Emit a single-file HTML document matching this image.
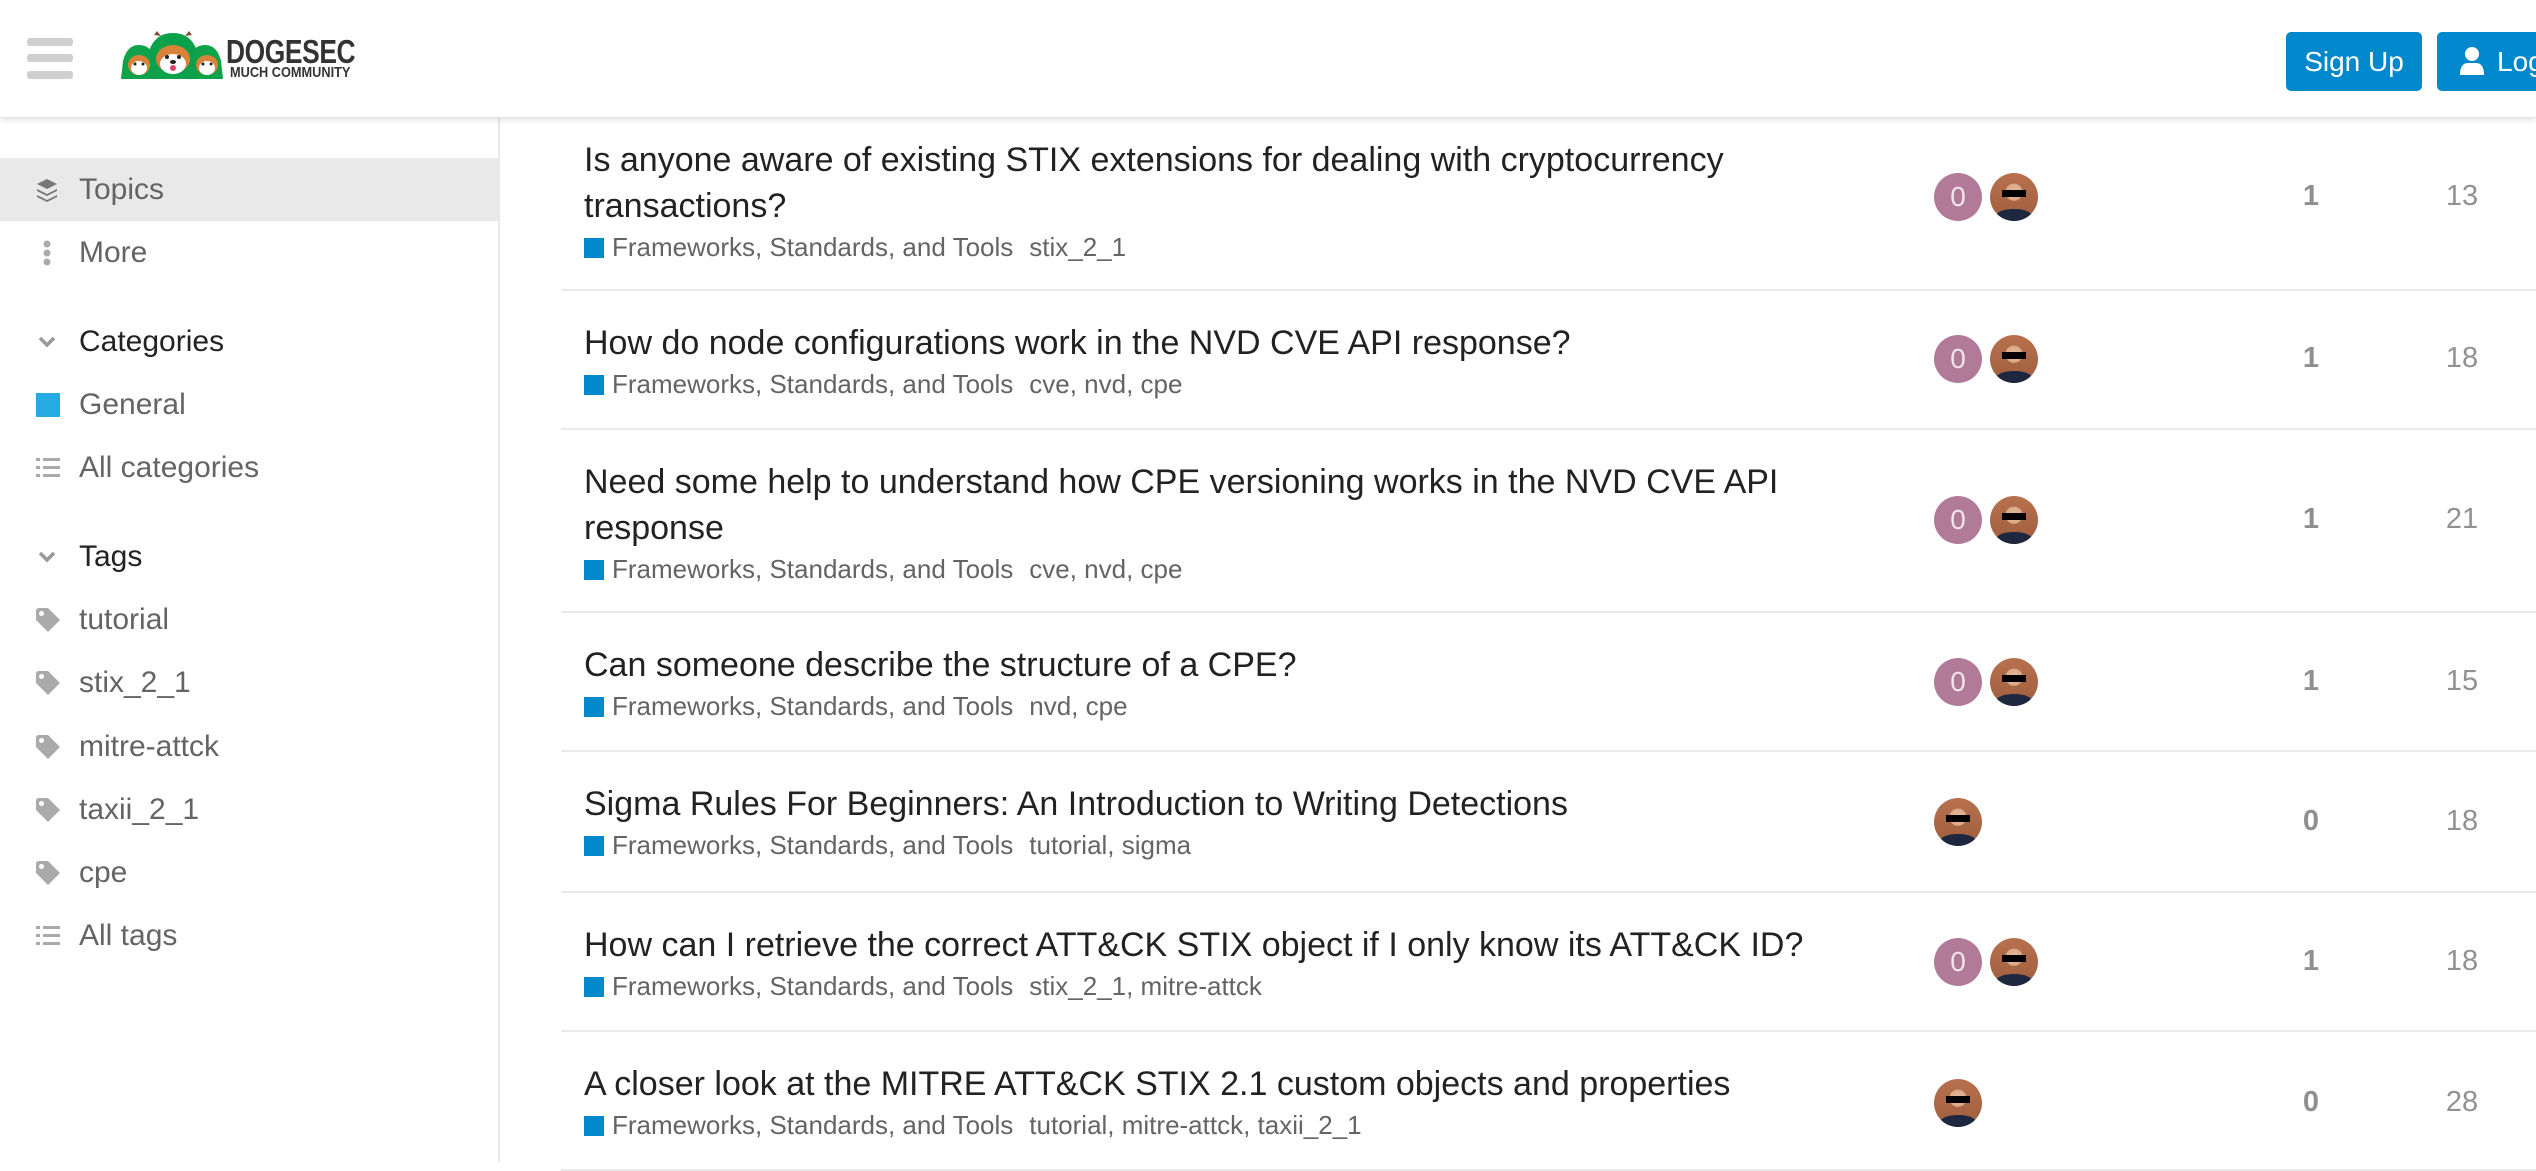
<!DOCTYPE html>
<html><head><meta charset="utf-8"><style>
*{margin:0;padding:0;box-sizing:border-box}
body{width:2536px;height:1162px;overflow:hidden;background:#fff;font-family:"Liberation Sans",Arial,sans-serif;position:relative}
.hdr{position:absolute;left:0;top:0;width:2536px;height:118px;background:#fff;z-index:5;box-shadow:0 2px 6px rgba(0,0,0,.12);border-bottom:1px solid #e4e4e4;overflow:hidden}
.bar{position:absolute;left:27px;width:46px;height:8px;border-radius:3px;background:#cfcfcf}
.btn{position:absolute;top:32px;height:59px;background:#0088cc;color:#fff;border-radius:5px;font-size:28px;line-height:59px;white-space:nowrap}
.side{position:absolute;left:0;top:118px;width:500px;height:1044px;border-right:2px solid #e9e9e9}
.si{position:absolute;left:0;width:498px;height:63px;line-height:63px;font-size:30px;color:#646464;padding-left:79px}
.si.h{color:#222}
.si svg{position:absolute;left:36px;top:50%;transform:translateY(-50%)}
.row{position:absolute;left:561px;width:1975px;border-bottom:2px solid #e9e9e9}
.t{position:absolute;left:23px;top:29px;width:1300px;font-size:34px;line-height:46px;color:#222}
.m{font-size:26px;line-height:30px;color:#646464;margin-top:3px}
.m b{font-weight:normal;margin-left:16px}
.sq{display:inline-block;width:20px;height:20px;background:#0088cc;vertical-align:-2px;margin-right:8px}
.av{position:absolute;width:48px;height:48px;border-radius:50%}
.p0{background:#b07a98;color:#f0e4ea;font-size:28px;text-align:center;line-height:48px}
.ph{background:radial-gradient(circle at 50% 40%,#e8c0a0 0,#d9a888 22%,transparent 24%),linear-gradient(#b8714e,#9e5e3e);overflow:hidden}
.ph:before{content:"";position:absolute;left:12px;top:17px;width:24px;height:7px;background:#000}
.ph:after{content:"";position:absolute;left:6px;top:36px;width:36px;height:14px;background:#1d2740;border-radius:50% 50% 0 0}
.rp{position:absolute;font-size:29px;font-weight:bold;color:#8f8f8f;width:60px;text-align:center;left:1720px}
.vw{position:absolute;font-size:29px;color:#919191;width:80px;text-align:center;left:1861px}
</style></head><body>
<div class="hdr">
 <div class="bar" style="top:38px"></div><div class="bar" style="top:54px"></div><div class="bar" style="top:71px"></div>
 <svg style="position:absolute;left:121px;top:31px" width="104" height="50" viewBox="0 0 104 50">
  <path d="M0 48 L2 30 Q6 14 18 14 Q30 14 34 28 L36 48Z" fill="#0ea34a"/>
  <path d="M68 48 L68 28 Q72 14 84 14 Q96 14 100 30 L102 48Z" fill="#0ea34a"/>
  <path d="M28 48 L28 20 Q34 2 52 2 Q70 2 76 20 L76 48Z" fill="#0ba04a"/>
  <path d="M33 4 L36 0 L40 5Z M64 5 L68 0 L71 4Z" fill="#7a5330"/>
  <ellipse cx="52" cy="28" rx="17" ry="14" fill="#d9833a"/><ellipse cx="52" cy="33" rx="13" ry="10" fill="#fff"/>
  <ellipse cx="18" cy="34" rx="11" ry="10" fill="#d9833a"/><ellipse cx="18" cy="37" rx="8" ry="7" fill="#fff"/>
  <ellipse cx="86" cy="34" rx="11" ry="10" fill="#d9833a"/><ellipse cx="86" cy="37" rx="8" ry="7" fill="#fff"/>
  <circle cx="46" cy="26" r="2" fill="#222"/><circle cx="58" cy="26" r="2" fill="#222"/><ellipse cx="52" cy="31" rx="3" ry="2" fill="#222"/><ellipse cx="52" cy="37" rx="3" ry="3" fill="#e2436a"/>
  <circle cx="14" cy="33" r="1.5" fill="#222"/><circle cx="22" cy="33" r="1.5" fill="#222"/><circle cx="82" cy="33" r="1.5" fill="#222"/><circle cx="90" cy="33" r="1.5" fill="#222"/>
 </svg>
 <div style="position:absolute;left:226px;top:33px;font-size:33px;font-weight:bold;color:#333;transform:scaleX(.8);transform-origin:0 0;letter-spacing:-.5px">DOGESEC</div>
 <div style="position:absolute;left:230px;top:64px;font-size:15px;font-weight:bold;color:#333;transform:scaleX(.85);transform-origin:0 0">MUCH COMMUNITY</div>
 <div class="btn" style="left:2286px;width:136px;text-align:center">Sign Up</div>
 <div class="btn" style="left:2437px;width:140px;padding-left:60px">Log</div>
 <svg style="position:absolute;left:2460px;top:47px" width="24" height="28" viewBox="0 0 24 28"><circle cx="12" cy="7" r="7" fill="#fff"/><path d="M0 28 Q0 16 8 16 L16 16 Q24 16 24 28Z" fill="#fff"/></svg>
</div>
<div class="side">
 <div class="si" style="top:40px;background:#e9e9e9"><svg width="22" height="24" viewBox="0 0 22 24"><path d="M11 1 L21 6 L11 11 L1 6Z M1 11 L11 16 L21 11 L21 13 L11 18 L1 13Z M1 17 L11 22 L21 17 L21 19 L11 24 L1 19Z" fill="#777"/></svg>Topics</div>
 <div class="si" style="top:103px"><svg width="22" height="26" viewBox="0 0 22 26"><circle cx="11" cy="4" r="3.5" fill="#aaa"/><circle cx="11" cy="13" r="3.5" fill="#aaa"/><circle cx="11" cy="22" r="3.5" fill="#aaa"/></svg>More</div>
 <div class="si h" style="top:192px"><svg width="22" height="14" viewBox="0 0 22 14"><path d="M4 3 L11 10 L18 3" stroke="#999" stroke-width="3.5" fill="none"/></svg>Categories</div>
 <div class="si" style="top:255px"><svg width="24" height="24"><rect width="24" height="24" fill="#25aae1"/></svg>General</div>
 <div class="si" style="top:318px"><svg width="24" height="20" viewBox="0 0 24 20"><g fill="#aaa"><rect x="0" y="0" width="4" height="3"/><rect x="7" y="0" width="17" height="3"/><rect x="0" y="8" width="4" height="3"/><rect x="7" y="8" width="17" height="3"/><rect x="0" y="16" width="4" height="3"/><rect x="7" y="16" width="17" height="3"/></g></svg>All categories</div>
 <div class="si h" style="top:407px"><svg width="22" height="14" viewBox="0 0 22 14"><path d="M4 3 L11 10 L18 3" stroke="#999" stroke-width="3.5" fill="none"/></svg>Tags</div>
 <div class="si" style="top:470px"><svg width="24" height="24" viewBox="0 0 24 24"><path d="M0 3 Q0 0 3 0 L12 0 L24 12 L12 24 L0 12Z" fill="#aaa"/><circle cx="5.5" cy="5.5" r="2.5" fill="#fff"/></svg>tutorial</div>
 <div class="si" style="top:533px"><svg width="24" height="24" viewBox="0 0 24 24"><path d="M0 3 Q0 0 3 0 L12 0 L24 12 L12 24 L0 12Z" fill="#aaa"/><circle cx="5.5" cy="5.5" r="2.5" fill="#fff"/></svg>stix_2_1</div>
 <div class="si" style="top:597px"><svg width="24" height="24" viewBox="0 0 24 24"><path d="M0 3 Q0 0 3 0 L12 0 L24 12 L12 24 L0 12Z" fill="#aaa"/><circle cx="5.5" cy="5.5" r="2.5" fill="#fff"/></svg>mitre-attck</div>
 <div class="si" style="top:660px"><svg width="24" height="24" viewBox="0 0 24 24"><path d="M0 3 Q0 0 3 0 L12 0 L24 12 L12 24 L0 12Z" fill="#aaa"/><circle cx="5.5" cy="5.5" r="2.5" fill="#fff"/></svg>taxii_2_1</div>
 <div class="si" style="top:723px"><svg width="24" height="24" viewBox="0 0 24 24"><path d="M0 3 Q0 0 3 0 L12 0 L24 12 L12 24 L0 12Z" fill="#aaa"/><circle cx="5.5" cy="5.5" r="2.5" fill="#fff"/></svg>cpe</div>
 <div class="si" style="top:786px"><svg width="24" height="20" viewBox="0 0 24 20"><g fill="#aaa"><rect x="0" y="0" width="4" height="3"/><rect x="7" y="0" width="17" height="3"/><rect x="0" y="8" width="4" height="3"/><rect x="7" y="8" width="17" height="3"/><rect x="0" y="16" width="4" height="3"/><rect x="7" y="16" width="17" height="3"/></g></svg>All tags</div>
</div>

<div class="row" style="top:108px;height:183px"><div class="t">Is anyone aware of existing STIX extensions for dealing with cryptocurrency transactions?<div class="m"><span class="sq"></span>Frameworks, Standards, and Tools<b>stix_2_1</b></div></div>
<div class="av p0" style="left:1373px;top:65px">0</div><div class="av ph" style="left:1429px;top:65px"></div><div class="rp" style="top:72px">1</div><div class="vw" style="top:72px">13</div></div>

<div class="row" style="top:291px;height:139px"><div class="t">How do node configurations work in the NVD CVE API response?<div class="m"><span class="sq"></span>Frameworks, Standards, and Tools<b>cve, nvd, cpe</b></div></div>
<div class="av p0" style="left:1373px;top:44px">0</div><div class="av ph" style="left:1429px;top:44px"></div><div class="rp" style="top:51px">1</div><div class="vw" style="top:51px">18</div></div>

<div class="row" style="top:430px;height:183px"><div class="t">Need some help to understand how CPE versioning works in the NVD CVE API response<div class="m"><span class="sq"></span>Frameworks, Standards, and Tools<b>cve, nvd, cpe</b></div></div>
<div class="av p0" style="left:1373px;top:66px">0</div><div class="av ph" style="left:1429px;top:66px"></div><div class="rp" style="top:73px">1</div><div class="vw" style="top:73px">21</div></div>

<div class="row" style="top:613px;height:139px"><div class="t">Can someone describe the structure of a CPE?<div class="m"><span class="sq"></span>Frameworks, Standards, and Tools<b>nvd, cpe</b></div></div>
<div class="av p0" style="left:1373px;top:45px">0</div><div class="av ph" style="left:1429px;top:45px"></div><div class="rp" style="top:52px">1</div><div class="vw" style="top:52px">15</div></div>

<div class="row" style="top:752px;height:141px"><div class="t">Sigma Rules For Beginners: An Introduction to Writing Detections<div class="m"><span class="sq"></span>Frameworks, Standards, and Tools<b>tutorial, sigma</b></div></div>
<div class="av ph" style="left:1373px;top:46px"></div><div class="rp" style="top:53px">0</div><div class="vw" style="top:53px">18</div></div>

<div class="row" style="top:893px;height:139px"><div class="t">How can I retrieve the correct ATT&amp;CK STIX object if I only know its ATT&amp;CK ID?<div class="m"><span class="sq"></span>Frameworks, Standards, and Tools<b>stix_2_1, mitre-attck</b></div></div>
<div class="av p0" style="left:1373px;top:45px">0</div><div class="av ph" style="left:1429px;top:45px"></div><div class="rp" style="top:52px">1</div><div class="vw" style="top:52px">18</div></div>

<div class="row" style="top:1032px;height:139px"><div class="t">A closer look at the MITRE ATT&amp;CK STIX 2.1 custom objects and properties<div class="m"><span class="sq"></span>Frameworks, Standards, and Tools<b>tutorial, mitre-attck, taxii_2_1</b></div></div>
<div class="av ph" style="left:1373px;top:47px"></div><div class="rp" style="top:54px">0</div><div class="vw" style="top:54px">28</div></div>
</body></html>
